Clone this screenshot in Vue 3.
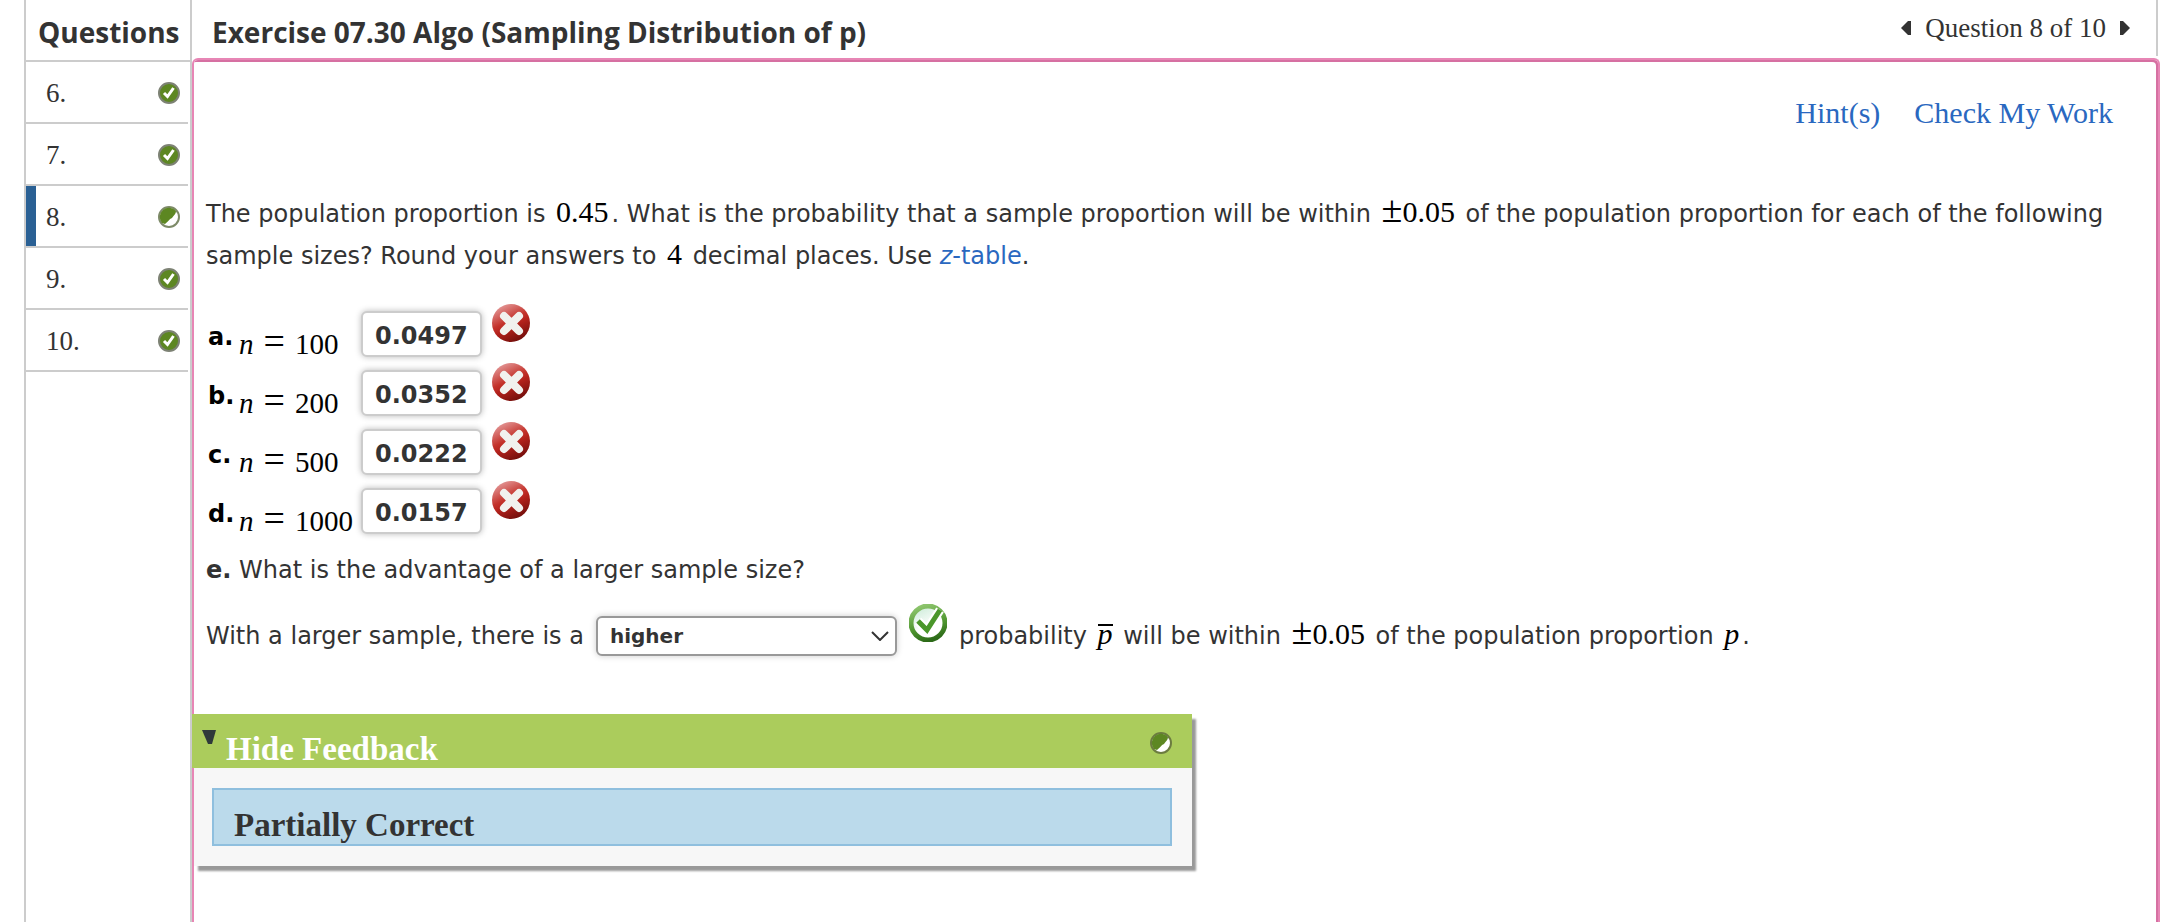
<template>
  <div class="page">
    <aside class="sidebar">
      <h2 class="sidebar-title">Questions</h2>
      <nav>
        <a
          v-for="q in questions"
          :key="q.number"
          href="#"
          class="question"
          :class="{ active: q.number === current }"
          @click.prevent="current = q.number"
        >
          <span>{{ q.number }}.</span>
          <svg v-if="q.status === 'correct'" class="status" viewBox="0 0 22 22">
            <circle cx="11" cy="11" r="10" fill="#5d8722" stroke="#7d8274" stroke-width="2" />
            <path d="M6 11 L9.500 14.500 L15.500 6" fill="none" stroke="#fff" stroke-width="3" />
          </svg>
          <svg v-else class="status" viewBox="0 0 22 22">
            <circle cx="11" cy="11" r="10" fill="#fff" stroke="#7d8a68" stroke-width="2" />
            <path d="M4 17 A9 9 0 0 1 18 5 C18 8 16 9 14 12 C11 13 10 16 7 18Z" fill="#5d8722" />
          </svg>
        </a>
      </nav>
    </aside>

    <main class="main">
      <header class="main-header">
        <h1 class="title">Exercise 07.30 Algo (Sampling Distribution of p)</h1>
        <div class="pager">
          <button type="button" aria-label="Previous question" @click="step(-1)">
            <svg viewBox="0 0 10 14"><path d="M0 7 L7 0 H10 V14 H7Z" fill="#333" /></svg>
          </button>
          <span>Question {{ current }} of 10</span>
          <button type="button" aria-label="Next question" @click="step(1)">
            <svg viewBox="0 0 10 14"><path d="M10 7 L3 0 H0 V14 H3Z" fill="#333" /></svg>
          </button>
        </div>
      </header>

      <section class="panel">
        <div class="actions">
          <a href="#">Hint(s)</a>
          <a href="#">Check My Work</a>
        </div>

        <div class="content">
          <p class="prompt">
            The population proportion is <span class="math">0.45</span>. What is the probability that a sample
            proportion will be within <span class="math"><span class="op">±</span>0.05</span> of the population
            proportion for each of the following sample sizes? Round your answers to
            <span class="math">4</span> decimal places. Use <a href="#"><i>z</i>-table</a>.
          </p>

          <div v-for="a in answers" :key="a.part" class="answer">
            <label class="part" :for="`answer-${a.part}`">{{ a.part }}.</label>
            <span class="equation"><i>n</i><span class="op">=</span><span>{{ a.n }}</span></span>
            <input :id="`answer-${a.part}`" v-model="a.value" class="answer-input" type="text" />
            <svg class="mark" viewBox="0 0 38 38">
              <defs>
                <linearGradient :id="`red-${a.part}`" x1="0.2" y1="0" x2="0.7" y2="1">
                  <stop offset="0" stop-color="#e6a0a0" />
                  <stop offset="0.45" stop-color="#c4332c" />
                  <stop offset="0.6" stop-color="#b4221c" />
                  <stop offset="1" stop-color="#6e0d0a" />
                </linearGradient>
              </defs>
              <circle cx="19" cy="19" r="19" :fill="`url(#red-${a.part})`" />
              <path d="M12 12 L27 27 M27 12 L12 27" stroke="#f1f1ee" stroke-width="8" stroke-linecap="round" />
            </svg>
          </div>

          <p class="prompt part-e"><b>e.</b> What is the advantage of a larger sample size?</p>

          <div class="sentence">
            <label for="advantage">With a larger sample, there is a</label>
            <span class="select-wrap">
              <select id="advantage" v-model="advantage">
                <option>higher</option>
                <option>lower</option>
              </select>
              <svg class="chevron" viewBox="0 0 18 10">
                <path d="M1 1 L9 9 L17 1" fill="none" stroke="#333" stroke-width="2" />
              </svg>
            </span>
            <svg class="mark" viewBox="0 0 38 38">
              <defs>
                <linearGradient id="green" x1="0.3" y1="0" x2="0.6" y2="1">
                  <stop offset="0" stop-color="#8cc46c" />
                  <stop offset="0.6" stop-color="#4f962f" />
                  <stop offset="1" stop-color="#2c6a18" />
                </linearGradient>
                <linearGradient id="glass" x1="0" y1="0" x2="0.5" y2="1">
                  <stop offset="0" stop-color="#c4e8d2" />
                  <stop offset="0.7" stop-color="#fff" />
                </linearGradient>
              </defs>
              <circle cx="19" cy="19" r="17" fill="url(#glass)" stroke="url(#green)" stroke-width="5" />
              <path d="M9 17 L18 26 L31 6" fill="none" stroke="#fff" stroke-width="9" />
              <path d="M9 17 L18 26 L31 6" fill="none" stroke="#4a962a" stroke-width="5" />
            </svg>
            <span>
              probability <i class="math bar">p</i> will be within
              <span class="math"><span class="op">±</span>0.05</span> of the population proportion
              <i class="math">p</i>.
            </span>
          </div>
        </div>

        <section class="feedback">
          <button type="button" class="feedback-header" @click="open = !open">
            <svg class="caret" viewBox="0 0 14 14"><path d="M0 0 H14 L10 14 H6Z" fill="#2f3a3a" /></svg>
            <span class="feedback-title">Hide Feedback</span>
            <svg class="status" viewBox="0 0 22 22">
              <circle cx="11" cy="11" r="10" fill="#fff" stroke="#6c7c40" stroke-width="2" />
              <path d="M4 17 A9 9 0 0 1 18 5 C18 8 16 9 14 12 C11 13 10 16 7 18Z" fill="#5d8722" />
            </svg>
          </button>
          <div v-show="open" class="feedback-body">
            <div class="result">Partially Correct</div>
          </div>
        </section>
      </section>
    </main>
  </div>
</template>

<script setup>
import { ref } from 'vue';

const current = ref(8);
const open = ref(true);
const advantage = ref('higher');

const questions = [
  { number: 6, status: 'correct' },
  { number: 7, status: 'correct' },
  { number: 8, status: 'partial' },
  { number: 9, status: 'correct' },
  { number: 10, status: 'correct' },
];

const answers = ref([
  { part: 'a', n: 100, value: '0.0497' },
  { part: 'b', n: 200, value: '0.0352' },
  { part: 'c', n: 500, value: '0.0222' },
  { part: 'd', n: 1000, value: '0.0157' },
]);

function step(by) {
  current.value = Math.min(10, Math.max(1, current.value + by));
}
</script>

<style>
body {
  background: #fff;
}
</style>

<style scoped>
.page {
  display: grid;
  grid-template-columns: 168px 1fr;
  min-height: 100vh;
  padding-left: 24px;
  box-sizing: border-box;
  color: #333;
  font-family: "DejaVu Sans", sans-serif;
  font-size: 24px;
}
a {
  color: #2a68c0;
  text-decoration: none;
}
button {
  border: 0;
  padding: 0;
  background: none;
  cursor: pointer;
}
svg {
  display: block;
  flex: none;
}
.status {
  width: 22px;
  height: 22px;
}

/* sidebar */
.sidebar {
  border-left: 2px solid #ccc;
  border-right: 2px solid #ccc;
}
.sidebar-title,
.title {
  margin: 0;
  font: bold 28px "Open Sans", sans-serif;
}
.sidebar-title {
  display: flex;
  align-items: center;
  height: 62px;
  padding: 4px 0 0 12px;
  box-sizing: border-box;
  border-bottom: 2px solid #ccc;
}
.question {
  display: flex;
  align-items: center;
  justify-content: space-between;
  height: 62px;
  margin-right: 2px;
  padding: 2px 8px 0 20px;
  box-sizing: border-box;
  border-bottom: 2px solid #ccc;
  color: #333;
  font: 27px "Liberation Serif", serif;
}
.question.active {
  background: linear-gradient(90deg, #2a6094 10px, transparent 10px);
}

/* main column */
.main {
  display: flex;
  flex-direction: column;
  min-width: 0;
}
.main-header {
  display: flex;
  align-items: center;
  justify-content: space-between;
  height: 56px;
  margin: 0 8px 2px 0;
  padding: 0 26px 0 20px;
  border-right: 2px solid #ccc;
}
.title {
  padding-top: 8px;
}
.pager {
  display: flex;
  align-items: center;
  gap: 14px;
  font: 27px "Liberation Serif", serif;
}
.pager svg {
  width: 10px;
  height: 14px;
}
.panel {
  flex: 1;
  margin-right: 6px;
  border: 2px solid #e786b5;
  border-bottom: 0;
  border-radius: 6px 6px 0 0;
  box-shadow: inset -2px 2px #d670a2;
  padding-bottom: 50px;
}
.actions {
  display: flex;
  justify-content: flex-end;
  gap: 34px;
  padding: 34px 45px 0 0;
  font: 30px/38px "Liberation Serif", serif;
}
.content {
  padding: 61px 28px 0 12px;
}
.prompt {
  margin: 0 0 27px;
  line-height: 42px;
}
.math {
  margin: 0 3px;
  color: #000;
  font-family: "Liberation Serif", serif;
  font-size: 30px;
  line-height: 1;
}
.op {
  font-size: 38px;
  line-height: 29px;
}
.bar {
  display: inline-block;
  line-height: 16px;
  border-top: 2px solid #000;
}

/* answers */
.answer {
  display: grid;
  grid-template-columns: 31px 122px 131px 38px;
  align-items: start;
  height: 59px;
  padding-left: 2px;
}
.part {
  padding-top: 19px;
  color: #000;
  font-weight: bold;
  line-height: 28px;
}
.equation {
  display: flex;
  align-items: baseline;
  gap: 10px;
  padding-top: 23px;
  color: #000;
  font: 29px/29px "Liberation Serif", serif;
}
.answer-input {
  width: 121px;
  height: 46px;
  margin-top: 7px;
  padding: 3px 12px 0;
  box-sizing: border-box;
  border: 2px solid #ccc;
  border-radius: 6px;
  box-shadow: 0 0 6px #bbb;
  color: #333;
  font: bold 24px "DejaVu Sans", sans-serif;
}
.mark {
  width: 38px;
  height: 38px;
}
.part-e {
  margin: 9px 0 13px;
}
.sentence {
  display: flex;
  align-items: center;
  gap: 12px;
  line-height: 42px;
}
.sentence .mark {
  margin-bottom: 26px;
}
.select-wrap {
  position: relative;
  display: flex;
}
select {
  appearance: none;
  width: 301px;
  height: 40px;
  padding: 0 40px 0 12px;
  border: 2px solid #999;
  border-radius: 6px;
  background: #fff;
  box-shadow: 0 0 6px #ccc;
  color: #333;
  font: bold 20px "DejaVu Sans", sans-serif;
}
.chevron {
  position: absolute;
  top: 15px;
  right: 8px;
  width: 18px;
  height: 10px;
  pointer-events: none;
}

/* feedback */
.feedback {
  max-width: 998px;
  margin-top: 46px;
  background: #f7f7f7;
  box-shadow: 4px 5px 2px #999;
}
.feedback-header {
  display: flex;
  align-items: center;
  width: calc(100% + 2px);
  height: 54px;
  margin-left: -2px;
  padding: 0 20px 0 10px;
  background: #abcc5c;
}
.caret {
  width: 14px;
  height: 14px;
  margin: 0 10px 8px 0;
}
.feedback-title {
  flex: 1;
  padding-top: 16px;
  color: #fff;
  font: bold 33px "Liberation Serif", serif;
  text-align: left;
}
.feedback-header .status {
  margin-top: 4px;
}
.feedback-body {
  padding: 20px 20px 20px 18px;
}
.result {
  padding: 16px 20px 0;
  border: 2px solid #8fbfde;
  background: #bbdaeb;
  font: bold 33px/38px "Liberation Serif", serif;
}
</style>
